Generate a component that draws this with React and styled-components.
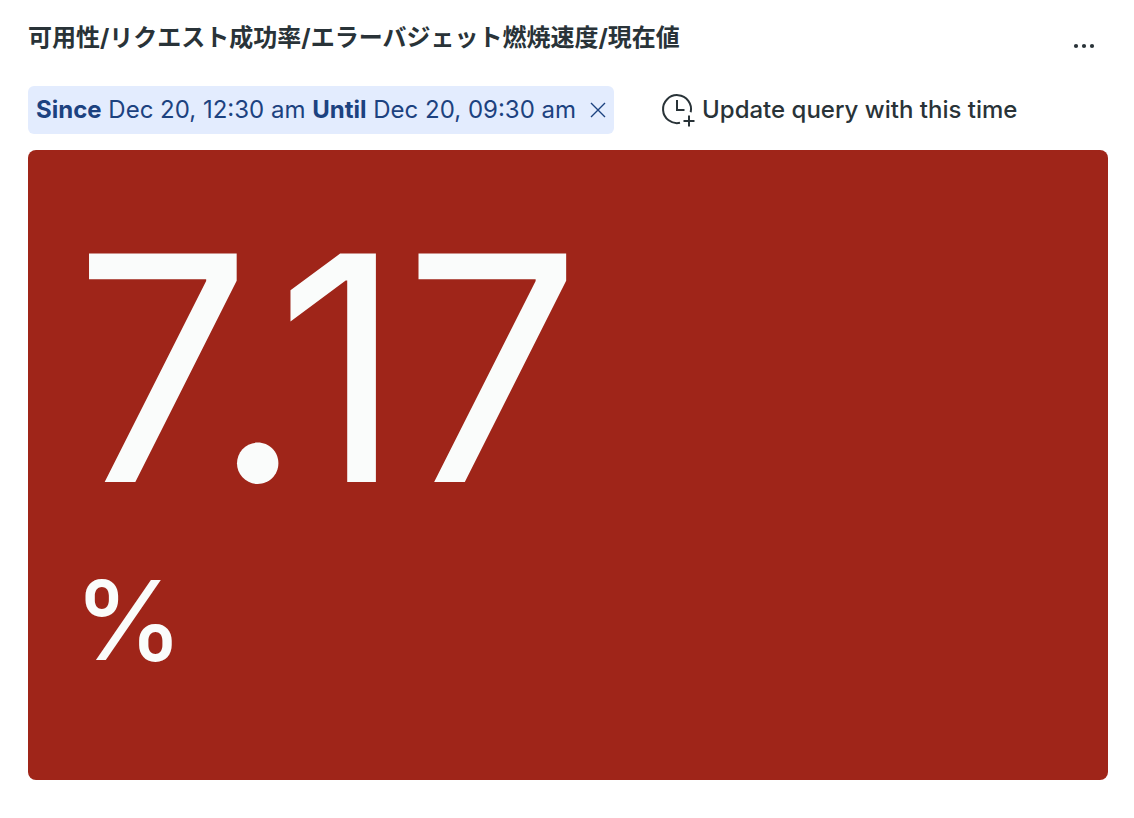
import styled, { createGlobalStyle } from "styled-components";

const GlobalStyle = createGlobalStyle`
  * {
    box-sizing: border-box;
  }

  body {
    margin: 0;
    background-color: #ffffff;
    color: #293338;
    font-family: Inter, "Noto Sans CJK JP", sans-serif;
  }

  button {
    padding: 0;
    border: none;
    background: none;
    color: inherit;
    font: inherit;
    cursor: pointer;
  }
`;

const Widget = styled.section`
  display: flex;
  flex-direction: column;
  padding: 16px 26px 38px 28px;
`;

const Header = styled.header`
  display: flex;
  justify-content: space-between;
  align-items: center;
`;

const Title = styled.h1`
  margin: 0;
  font-size: 24px;
  line-height: 44px;
  font-weight: 700;
`;

const MenuButton = styled.button`
  display: flex;
  width: 48px;
  height: 20px;
  justify-content: center;
  align-items: flex-end;
`;

const Toolbar = styled.div`
  display: flex;
  align-items: center;
  gap: 48px;
  margin: 26px 0 16px;
  font-size: 24px;
  line-height: 32px;
  white-space: nowrap;
`;

const TimeRange = styled.div`
  display: flex;
  align-items: center;
  gap: 14px;
  padding: 8px;
  border-radius: 6px;
  background-color: #e3ecfe;
  color: #1c4280;
`;

const IconButton = styled.button`
  display: flex;
`;

const UpdateButton = styled.button`
  display: flex;
  align-items: center;
  gap: 8px;
  font-weight: 500;
`;

const Billboard = styled.div`
  display: flex;
  flex-direction: column;
  min-height: 630px;
  padding: 40px 46px;
  border-radius: 8px;
  background-color: #9f2519;
  color: #fafcfb;
`;

const Value = styled.div`
  font-size: 314px;
  line-height: 356px;
`;

const Unit = styled.div`
  font-size: 110px;
  line-height: 148px;
  font-weight: 500;
`;

function CloseIcon() {
  return (
    <svg width="16" height="16" viewBox="0 0 16 16" fill="none" stroke="currentColor" strokeWidth="1.4">
      <path d="M1 1l14 14M15 1L1 15" />
    </svg>
  );
}

function ClockPlusIcon() {
  return (
    <svg width="32" height="32" viewBox="0 0 32 32" fill="none" stroke="currentColor" strokeWidth="2" overflow="visible">
      <path d="M18 28.8A14 14 0 1 1 28.7 18.2" />
      <path d="M15 6v10h7.5M27 21.5v11M21.5 27h11" />
    </svg>
  );
}

function DotsIcon() {
  return (
    <svg width="22" height="4" viewBox="0 0 22 4" fill="currentColor" overflow="visible">
      <circle cx="3" cy="2" r="2.1" />
      <circle cx="11" cy="2" r="2.1" />
      <circle cx="19" cy="2" r="2.1" />
    </svg>
  );
}

function App() {
  return (
    <>
      <GlobalStyle />
      <Widget>
        <Header>
          <Title lang="ja">可用性/リクエスト成功率/エラーバジェット燃焼速度/現在値</Title>
          <MenuButton type="button" aria-label="More options">
            <DotsIcon />
          </MenuButton>
        </Header>
        <Toolbar>
          <TimeRange>
            <span>
              <b>Since</b> Dec 20, 12:30 am <b>Until</b> Dec 20, 09:30 am
            </span>
            <IconButton type="button" aria-label="Clear time range">
              <CloseIcon />
            </IconButton>
          </TimeRange>
          <UpdateButton type="button">
            <ClockPlusIcon />
            Update query with this time
          </UpdateButton>
        </Toolbar>
        <Billboard>
          <Value>7.17</Value>
          <Unit>%</Unit>
        </Billboard>
      </Widget>
    </>
  );
}

export default App;
